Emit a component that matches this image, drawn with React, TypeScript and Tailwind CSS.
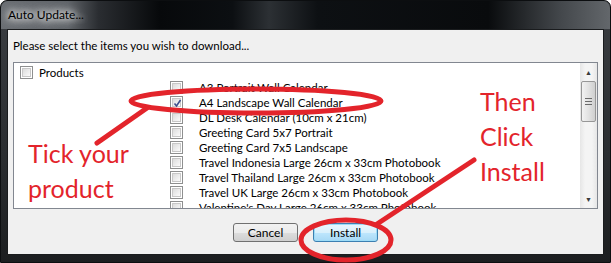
import React from 'react';

const items = [
  'A3 Portrait Wall Calendar',
  'A4 Landscape Wall Calendar',
  'DL Desk Calendar (10cm x 21cm)',
  'Greeting Card 5x7 Portrait',
  'Greeting Card 7x5 Landscape',
  'Travel Indonesia Large 26cm x 33cm Photobook',
  'Travel Thailand Large 26cm x 33cm Photobook',
  'Travel UK Large 26cm x 33cm Photobook',
  "Valentine's Day Large 26cm x 33cm Photobook",
];

function CheckBox({ checked }: { checked?: boolean }) {
  return (
    <span className="relative flex h-[13px] w-[13px] shrink-0 border border-[#8e8f8f] bg-white p-px">
      <span className="block h-full w-full border border-[#c8c8c8] bg-[linear-gradient(135deg,#dcdcdc,#fbfbfb)]" />
      {checked && (
        <svg viewBox="0 0 13 13" className="absolute inset-0 h-[13px] w-[13px]">
          <path d="M3.5 6.5 L5.5 9 L9.5 3" fill="none" stroke="#3d4f8e" strokeWidth="1.6" />
        </svg>
      )}
    </span>
  );
}

function Row({ label, checked, child }: { label: string; checked?: boolean; child?: boolean }) {
  return (
    <div className={`flex h-[15px] items-center ${child ? 'gap-[16px] pl-[156px]' : 'gap-[6px] pl-[6px]'}`}>
      <CheckBox checked={checked} />
      <span className="whitespace-nowrap leading-none">{label}</span>
    </div>
  );
}

function Scrollbar() {
  return (
    <div className="flex h-full w-[17px] shrink-0 flex-col bg-[linear-gradient(90deg,#e6e6e6,#f4f4f4_30%,#f4f4f4_70%,#e6e6e6)]">
      <div className="flex h-[18px] items-center justify-center text-[7px] text-[#3a3a3a]">▲</div>
      <div className="mx-px flex h-[41px] flex-col items-center justify-center gap-[2px] rounded-[2px] border border-[#979797] bg-[linear-gradient(90deg,#f2f2f2,#e2e2e2_50%,#cfcfcf)]">
        <span className="h-px w-[7px] bg-[#6a6a6a]" />
        <span className="h-px w-[7px] bg-[#6a6a6a]" />
        <span className="h-px w-[7px] bg-[#6a6a6a]" />
      </div>
      <div className="flex-1" />
      <div className="flex h-[18px] items-center justify-center text-[7px] text-[#3a3a3a]">▼</div>
    </div>
  );
}

export default function App() {
  return (
    <div className="relative h-[263px] w-[611px] overflow-hidden font-['Lato',sans-serif]">
      <div className="flex h-full w-full flex-col rounded-t-[7px] border border-[#0c0e10] bg-[linear-gradient(180deg,#3b3e42,#2a2d30_60%,#1c1e20)]">
        {/* Title bar */}
        <div className="flex h-[28px] shrink-0 items-center rounded-t-[7px] bg-[linear-gradient(90deg,#6a6e73_0%,#5f6368_11%,#2a2d31_16%,#07090b_26%,#0c0f12_38%,#2c3034_44%,#0d1013_52%,#090b0d_80%,#44484c_92%,#63676b_100%)] pl-[7px]">
          <span className="text-[12px] text-black [text-shadow:0_0_6px_#fff,0_0_10px_#fff,0_0_14px_#fff]">Auto Update...</span>
        </div>

        {/* Client area */}
        <div className="mx-[6px] flex h-[226px] flex-col border border-[#1a1c1e] bg-[#f0f0f0] text-[11.5px] text-black">
          <div className="flex h-[32px] items-center pl-[5px]">Please select the items you wish to download...</div>
          <div className="mx-[5px] flex h-[147px] border border-[#828790] bg-white">
            <div className="flex-1 overflow-hidden pt-[2px]">
              <Row label="Products" />
              {items.map((it, i) => (
                <Row key={it} label={it} child checked={i === 1} />
              ))}
            </div>
            <Scrollbar />
          </div>
          <div className="flex flex-1 items-center justify-center gap-[15px] pt-[2px]">
            <button className="h-[19px] w-[65px] rounded-[3px] border border-[#707070] bg-[linear-gradient(180deg,#f2f2f2,#ebebeb_50%,#dddddd_51%,#cfcfcf)] text-[12px] leading-none">
              Cancel
            </button>
            <button className="h-[19px] w-[65px] rounded-[3px] border border-[#3c7fb1] bg-[linear-gradient(180deg,#eaf6fd,#d9f0fc_50%,#bee6fd_51%,#a7d9f5)] text-[12px] leading-none shadow-[inset_0_0_0_1px_#9ddcf7]">
              Install
            </button>
          </div>
        </div>
      </div>

      {/* Red annotations */}
      <div className="pointer-events-none absolute left-[28px] top-[136px] text-[25px] leading-[35px] text-[#e3242b]">
        <div>Tick your</div>
        <div>product</div>
      </div>
      <div className="pointer-events-none absolute left-[480px] top-[84px] text-[25px] leading-[35px] text-[#e3242b]">
        <div>Then</div>
        <div>Click</div>
        <div>Install</div>
      </div>
      <svg className="pointer-events-none absolute left-0 top-0" width="611" height="263" viewBox="0 0 611 263">
        <ellipse cx="256" cy="101" rx="125" ry="12" fill="none" stroke="#e3242b" strokeWidth="5" />
        <ellipse cx="346" cy="240" rx="45" ry="20" fill="none" stroke="#e3242b" strokeWidth="5" />
        <line x1="97" y1="143" x2="147" y2="108" stroke="#e3242b" strokeWidth="5" strokeLinecap="round" />
        <line x1="377" y1="224" x2="474" y2="160" stroke="#e3242b" strokeWidth="5" strokeLinecap="round" />
      </svg>
    </div>
  );
}
